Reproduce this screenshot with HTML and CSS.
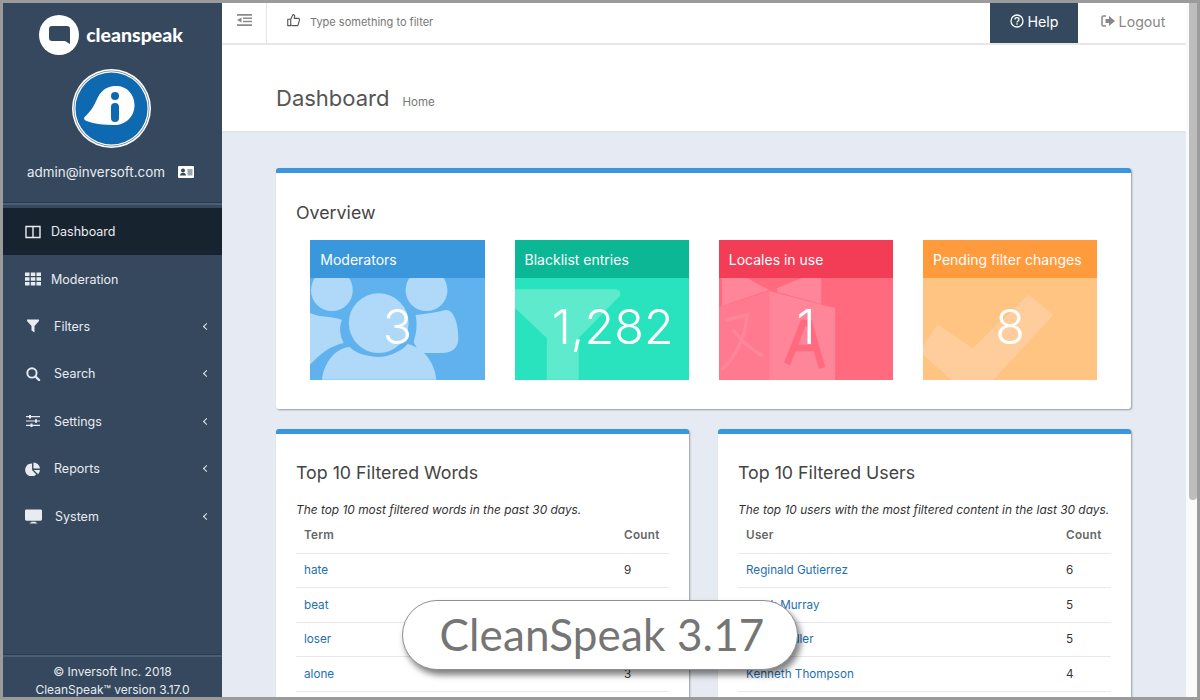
FILE: index.html
```html
<!DOCTYPE html>
<html lang="en">
<head>
    <meta charset="UTF-8">
    <meta name="viewport" content="width=device-width, initial-scale=1.0">
    <title>CleanSpeak Dashboard</title>
    <link rel="stylesheet" href="styles.css">
</head>
<body>

<div class="app">

    <aside class="sidebar">
        <div class="brand">
            <svg class="brand-icon" viewBox="0 0 40 40">
                <circle cx="20" cy="20" r="20" fill="#fff"/>
                <path d="M13 11h15a3 3 0 0 1 3 3v15l-5-3H13a3 3 0 0 1-3-3V14a3 3 0 0 1 3-3z" fill="#34485e"/>
            </svg>
            <span class="brand-name">cleanspeak</span>
        </div>
        <div class="avatar">
            <svg viewBox="0 0 79 79">
                <circle cx="39.500" cy="39.500" r="39.500" fill="#fff"/>
                <circle cx="39.500" cy="39.500" r="38" fill="#7d8a99"/>
                <circle cx="39.500" cy="39.500" r="37.200" fill="#fff"/>
                <circle cx="39.500" cy="39.500" r="36" fill="#0f69b0"/>
                <path d="M12.500 48c5-4 9-10 13-19 5-10 12-12 19-12 10 0 18 8 18 19 0 12-9 20-20 20-10 0-20-1-28-4-2-1-3-2-2-4z" fill="#fff"/>
                <circle cx="43" cy="27" r="4" fill="#0f69b0"/>
                <rect x="39" y="34" width="8" height="19" rx="4" fill="#0f69b0"/>
            </svg>
        </div>
        <div class="user">
            <span>admin@inversoft.com</span>
            <svg class="user-card" viewBox="0 0 16 12">
                <path d="M1 0h14a1 1 0 0 1 1 1v10a1 1 0 0 1-1 1H1a1 1 0 0 1-1-1V1a1 1 0 0 1 1-1z" fill="#fff"/>
                <circle cx="5" cy="4.500" r="2" fill="#34485e"/>
                <path d="M2 9.500c0-2 1.500-2.500 3-2.500s3 .5 3 2.500z" fill="#34485e"/>
                <rect x="9.500" y="3" width="5" height="6.500" fill="#9aa7b5"/>
            </svg>
        </div>

        <nav class="menu">
            <a class="menu-item active">
                <svg class="menu-icon" viewBox="0 0 16 14"><path d="M1 1.500h14v11H1zM8 1.500v11" fill="none" stroke="#e8ecf0" stroke-width="1.400"/></svg>
                <span class="menu-text">Dashboard</span>
            </a>
            <a class="menu-item">
                <svg class="menu-icon" viewBox="0 0 16 13"><path d="M0 0h4.500v3.500H0zM5.800 0h4.500v3.500H5.800zM11.500 0H16v3.500h-4.500zM0 4.700h4.500v3.600H0zM5.800 4.700h4.500v3.600H5.800zM11.500 4.700H16v3.600h-4.500zM0 9.500h4.500V13H0zM5.800 9.500h4.500V13H5.800zM11.500 9.500H16V13h-4.500z" fill="#e8ecf0"/></svg>
                <span class="menu-text">Moderation</span>
            </a>
            <a class="menu-item sub">
                <svg class="menu-icon" viewBox="0 0 16 13"><path d="M2 0h12v1.500L9.500 6.500V13L6.500 11V6.500L2 1.500z" fill="#e8ecf0"/></svg>
                <span class="menu-text">Filters</span>
                <span class="chevron"></span>
            </a>
            <a class="menu-item sub">
                <svg class="menu-icon" viewBox="0 0 16 16"><circle cx="6.800" cy="6.800" r="5.300" fill="none" stroke="#e8ecf0" stroke-width="2.200"/><path d="M10.800 10.800L15 15" stroke="#e8ecf0" stroke-width="2.500" stroke-linecap="round"/></svg>
                <span class="menu-text">Search</span>
                <span class="chevron"></span>
            </a>
            <a class="menu-item sub">
                <svg class="menu-icon" viewBox="0 0 16 13"><path d="M1 2.200h14M1 6.500h14M1 10.800h14" stroke="#e8ecf0" stroke-width="1.200"/><path d="M4 .5h2v3.400H4zM10 4.800h2v3.400h-2zM5.500 9.100h2v3.400h-2z" fill="#e8ecf0"/></svg>
                <span class="menu-text">Settings</span>
                <span class="chevron"></span>
            </a>
            <a class="menu-item sub">
                <svg class="menu-icon" viewBox="0 0 16 15"><path d="M7 1.500V8.500l4.500 5A7 7 0 1 1 7 1.500z" fill="#e8ecf0"/><path d="M8.500 0.500a7 7 0 0 1 7 6.500h-7zM8.800 8.500h6.700a7 7 0 0 1-2 4.500z" fill="#e8ecf0"/></svg>
                <span class="menu-text">Reports</span>
                <span class="chevron"></span>
            </a>
            <a class="menu-item sub">
                <svg class="menu-icon wide" viewBox="0 0 18 15"><path d="M1.500 0h15A1.500 1.500 0 0 1 18 1.500v9a1.500 1.500 0 0 1-1.500 1.500h-15A1.500 1.500 0 0 1 0 10.500v-9A1.500 1.500 0 0 1 1.500 0zM6.500 13h5v1H13v1H5v-1h1.500z" fill="#e8ecf0"/></svg>
                <span class="menu-text">System</span>
                <span class="chevron"></span>
            </a>
        </nav>

        <div class="sidebar-foot">
            <div>© Inversoft Inc. 2018</div>
            <div>CleanSpeak™ version 3.17.0</div>
        </div>
    </aside>

    <main class="main">
        <header class="topbar">
            <button class="toggle">
                <svg viewBox="0 0 15 12"><path d="M0 0h15v1.800H0zM6 3.400h9v1.500H6zM6 6.800h9v1.500H6zM0 10.200h15V12H0zM4.500 3.500v5L0 6z" fill="#8a8a8a"/></svg>
            </button>
            <div class="filter">
                <svg viewBox="0 0 14 14"><path d="M4 6.200L6.500 1.200c1.300 0 2 1 1.700 2.300L7.800 5.300h4.400c1 0 1.500 1 1.200 1.800l-1.400 5c-.2.600-.7.900-1.300.9H6c-.8 0-1.300-.5-2-.5M.8 6.200H4V13H.8z" fill="none" stroke="#555" stroke-width="1.200" stroke-linejoin="round"/></svg>
                <span>Type something to filter</span>
            </div>
            <a class="help">
                <svg viewBox="0 0 14 14"><circle cx="7" cy="7" r="6" fill="none" stroke="#fff" stroke-width="1.300"/><path d="M5 5.500C5 4.300 6 3.700 7 3.700s2 .7 2 1.800c0 1.500-2 1.500-2 3" fill="none" stroke="#fff" stroke-width="1.300"/><rect x="6.300" y="9.300" width="1.400" height="1.400" fill="#fff"/></svg>
                Help
            </a>
            <a class="logout">
                <svg viewBox="0 0 14 12"><path d="M5 1H2.500A1.500 1.500 0 0 0 1 2.500v7A1.500 1.500 0 0 0 2.500 11H5" fill="none" stroke="#888" stroke-width="1.500"/><path d="M4.500 4H8V1l6 5-6 5V8H4.500z" fill="#888"/></svg>
                Logout
            </a>
        </header>

        <div class="page-head">
            <h1>Dashboard</h1>
            <span class="crumb">Home</span>
        </div>

        <div class="content">
            <section class="panel overview">
                <h2>Overview</h2>
                <div class="tiles">
                    <div class="tile blue">
                        <div class="tile-head">Moderators</div>
                        <div class="tile-body">
                            <svg class="tile-art" viewBox="0 0 175 102">
                                <g fill="#b0d8f8">
                                    <circle cx="22" cy="12" r="21"/>
                                    <circle cx="117" cy="12" r="21"/>
                                    <path d="M0 35C10 40 24 38 32 42C29 50 30 58 34 65C20 68 10 76 0 87z"/>
                                    <path d="M106 37C118 36 128 34 136 32C144 31 149 45 149 60C149 70 143 75 133 75H109C108 71 106 67 104 64C107 55 108 46 106 37z"/>
                                    <path d="M12 102C14 85 25 70 40 69C52 82 85 82 98 66C115 70 125 85 127 102z"/>
                                    <circle cx="69" cy="45" r="32" stroke="#5fb2ee" stroke-width="4"/>
                                </g>
                            </svg>
                            <span class="tile-num">3</span>
                        </div>
                    </div>
                    <div class="tile green">
                        <div class="tile-head">Blacklist entries</div>
                        <div class="tile-body">
                            <svg class="tile-art" viewBox="0 0 175 102">
                                <path d="M0 11H101C105 11 107 15 105 18L64 60V102H32V60L0 30z" fill="#5eebcd"/>
                            </svg>
                            <span class="tile-num shifted">1,282</span>
                        </div>
                    </div>
                    <div class="tile red">
                        <div class="tile-head">Locales in use</div>
                        <div class="tile-body">
                            <svg class="tile-art" viewBox="0 0 174 102">
                                <path d="M3 0H28L50 12L3 28zM58 10L83 0H102V26L58 14z" fill="#ff8599"/>
                                <path d="M0 29L50 13V102H0z" fill="#ff7a8e"/>
                                <path d="M50 13L116 30V102H50z" fill="#ff8599"/>
                                <path d="M68 86L84 45H90L103 90M75 70H97" fill="none" stroke="#ff6a7f" stroke-width="6.500"/>
                                <path d="M6 42L28 37C26 58 18 78 2 92M14 52C22 62 32 72 44 78" fill="none" stroke="#ff8599" stroke-width="3.500"/>
                            </svg>
                            <span class="tile-num">1</span>
                        </div>
                    </div>
                    <div class="tile orange">
                        <div class="tile-head">Pending filter changes</div>
                        <div class="tile-body">
                            <svg class="tile-art" viewBox="0 0 175 102">
                                <path d="M0 72L15 49L50 73L106 19L128 37L68 102H31L0 74z" fill="#ffcd9b" stroke="#ffcd9b" stroke-width="4" stroke-linejoin="round"/>
                            </svg>
                            <span class="tile-num">8</span>
                        </div>
                    </div>
                </div>
            </section>

            <div class="columns">
                <section class="panel">
                    <h2>Top 10 Filtered Words</h2>
                    <p class="note">The top 10 most filtered words in the past 30 days.</p>
                    <table>
                        <tr><th>Term</th><th class="count">Count</th></tr>
                        <tr><td><a>hate</a></td><td class="count">9</td></tr>
                        <tr><td><a>beat</a></td><td class="count"></td></tr>
                        <tr><td><a>loser</a></td><td class="count"></td></tr>
                        <tr><td><a>alone</a></td><td class="count">3</td></tr>
                    </table>
                </section>
                <section class="panel">
                    <h2>Top 10 Filtered Users</h2>
                    <p class="note">The top 10 users with the most filtered content in the last 30 days.</p>
                    <table>
                        <tr><th>User</th><th class="count">Count</th></tr>
                        <tr><td><a>Reginald Gutierrez</a></td><td class="count">6</td></tr>
                        <tr><td><a>Frank Murray</a></td><td class="count">5</td></tr>
                        <tr><td><a>Ed Chandler</a></td><td class="count">5</td></tr>
                        <tr><td><a>Kenneth Thompson</a></td><td class="count">4</td></tr>
                    </table>
                </section>
            </div>
        </div>
    </main>

    <div class="scrollbar"><div class="thumb"></div></div>

    <div class="version-badge">CleanSpeak 3.17</div>
</div>

</body>
</html>
```

FILE: styles.css
```css
* {
    box-sizing: border-box;
}

body {
    margin: 0;
    height: 700px;
    overflow: hidden;
    font-family: 'Inter', 'Liberation Sans', sans-serif;
    background-color: #9b9b9b;
    padding: 3px;
}

.app {
    position: relative;
    display: flex;
    height: 694px;
    overflow: hidden;
}

/* sidebar */
.sidebar {
    width: 219px;
    flex-shrink: 0;
    display: flex;
    flex-direction: column;
    background-color: #35485e;
    color: #e8ecf0;
}

.brand {
    display: flex;
    align-items: center;
    justify-content: center;
    gap: 7px;
    padding: 11px 3px 0 0;
    height: 52px;
}

.brand-icon {
    width: 40px;
    height: 40px;
}

.brand-name {
    font-family: 'Lato', sans-serif;
    font-weight: 900;
    font-size: 19.500px;
    color: #fff;
}

.avatar {
    display: flex;
    justify-content: center;
    margin: 14px 2px 0 0;
}

.avatar svg {
    width: 79px;
    height: 79px;
}

.user {
    display: flex;
    align-items: center;
    justify-content: center;
    gap: 13px;
    margin-top: 14px;
    padding-right: 4px;
    font-size: 13.400px;
    height: 20px;
}

.user-card {
    width: 16px;
    height: 12px;
}

.menu {
    margin-top: 21px;
    padding-top: 3px;
    border-top: 2px solid #4a5e74;
    box-shadow: 0 -1px 0 #2a3b4e;
    flex: 1;
}

.menu-item {
    display: flex;
    align-items: center;
    height: 47.400px;
    padding-left: 22px;
    font-size: 12.500px;
    color: #e8ecf0;
}

.menu-item.active {
    background-color: #17232f;
}

.menu-icon {
    width: 16px;
    height: 14px;
    margin-right: 10px;
    flex-shrink: 0;
}

.menu-item.sub .menu-icon {
    margin-right: 13px;
}

.menu-icon.wide {
    width: 17px;
    height: 15px;
}

.menu-text {
    flex: 1;
}

.chevron {
    width: 5px;
    height: 5px;
    margin-right: 13px;
    border-left: 1.500px solid #e8ecf0;
    border-bottom: 1.500px solid #e8ecf0;
    transform: rotate(45deg);
}

.sidebar-foot {
    border-top: 2px solid #4a5e74;
    box-shadow: 0 -1px 0 #2a3b4e;
    height: 42px;
    padding-top: 6px;
    text-align: center;
    font-size: 12px;
    line-height: 17.500px;
}

/* main column */
.main {
    flex: 1;
    min-width: 0;
    display: flex;
    flex-direction: column;
    background-color: #e6ebf3;
}

.topbar {
    display: flex;
    align-items: stretch;
    flex-shrink: 0;
    height: 42px;
    background-color: #fff;
    border-bottom: 2px solid #e7e7e7;
}

.toggle {
    width: 45px;
    border: 0;
    border-right: 1px solid #e7e7e7;
    background: none;
    padding: 0 0 4px 0;
}

.toggle svg {
    width: 15px;
    height: 12px;
}

.filter {
    flex: 1;
    display: flex;
    align-items: center;
    gap: 10px;
    padding: 0 0 2px 20px;
    font-size: 11px;
    color: #777;
}

.filter svg {
    width: 13px;
    height: 14px;
    margin-bottom: 4px;
}

.help, .logout {
    display: flex;
    align-items: center;
    justify-content: center;
    gap: 4px;
    padding-bottom: 4px;
    font-size: 14.200px;
}

.help {
    width: 88px;
    background-color: #34495e;
    color: #fff;
}

.help svg {
    width: 14px;
    height: 14px;
}

.logout {
    width: 108px;
    padding-left: 2px;
    color: #888;
}

.logout svg {
    width: 14px;
    height: 12px;
}

.page-head {
    flex-shrink: 0;
    display: flex;
    align-items: baseline;
    gap: 13px;
    height: 88px;
    padding: 40px 0 0 54px;
    background-color: #fff;
    border-bottom: 2px solid #e3e6ea;
}

h1 {
    margin: 0;
    font-size: 22px;
    font-weight: 400;
    color: #555;
}

.crumb {
    font-size: 11.500px;
    color: #777;
}

.content {
    padding: 35px 55px 0 54px;
}

/* panels */
.panel {
    background-color: #fff;
    border-top: 5px solid #3a96dd;
    border-radius: 3px;
    box-shadow: 1px 1px 2px rgba(0, 0, 0, 0.35);
    padding: 28px 20px 0 20px;
}

.panel h2 {
    margin: 0;
    font-size: 17.800px;
    font-weight: 400;
    color: #444;
    line-height: 24px;
}

.overview {
    height: 241px;
    margin-bottom: 20px;
}

.tiles {
    display: flex;
    gap: 30px;
    margin: 15px 13.700px 0 14.300px;
}

.tile {
    flex: 1;
    height: 140px;
    display: flex;
    flex-direction: column;
    color: #fff;
}

.tile-head {
    height: 38px;
    padding: 11px 0 0 10px;
    font-size: 14px;
}

.tile-body {
    position: relative;
    flex: 1;
    display: flex;
    align-items: center;
    justify-content: center;
    padding-bottom: 4px;
    overflow: hidden;
}

.tile-art {
    position: absolute;
    left: 0;
    top: 0;
    width: 100%;
    height: 100%;
}

.tile-num {
    position: relative;
    font-weight: 300;
    font-size: 48.500px;
    line-height: 1;
}

.tile-num.shifted {
    margin-left: 22px;
}

.blue .tile-head { background-color: #3a97dc; }
.blue .tile-body { background-color: #5fb2ee; }
.green .tile-head { background-color: #0bb795; }
.green .tile-body { background-color: #29e3be; }
.red .tile-head { background-color: #f33d56; }
.red .tile-body { background-color: #ff6a7f; }
.orange .tile-head { background-color: #ff9b3d; }
.orange .tile-body { background-color: #ffc382; }

.columns {
    display: grid;
    grid-template-columns: 413px 413px;
    gap: 29px;
}

.columns .panel {
    height: 300px;
    padding-top: 27px;
}

.note {
    margin: 17px 0 0 0;
    font-size: 11.900px;
    font-style: italic;
    color: #333;
    line-height: 16px;
}

table {
    width: 100%;
    border-collapse: collapse;
    font-size: 11.700px;
}

th, td {
    text-align: left;
    padding: 0 8px;
    height: 34.500px;
    border-bottom: 1px solid #e8e8e8;
    color: #333;
}

th {
    height: 35px;
    font-weight: 600;
    letter-spacing: 0.3px;
    color: #666;
}

td a {
    color: #1f6fae;
}

.count {
    width: 45px;
    padding-left: 0;
}

/* scrollbar down the right edge */
.scrollbar {
    width: 11px;
    flex-shrink: 0;
    background-color: #fafafa;
    padding-left: 3px;
}

.thumb {
    height: 497px;
    background-color: #bdbdbd;
    border-radius: 0 0 4px 4px;
}

.version-badge {
    position: absolute;
    left: 399px;
    top: 597px;
    width: 396px;
    height: 70px;
    display: flex;
    align-items: center;
    justify-content: center;
    padding: 0 0 3px 4px;
    background-color: #fff;
    border: 1px solid #8f8f8f;
    border-radius: 35px;
    box-shadow: 3px 5px 6px rgba(0, 0, 0, 0.5);
    font-family: 'Lato', sans-serif;
    font-size: 44px;
    letter-spacing: 0.150px;
    color: #757575;
}
```
